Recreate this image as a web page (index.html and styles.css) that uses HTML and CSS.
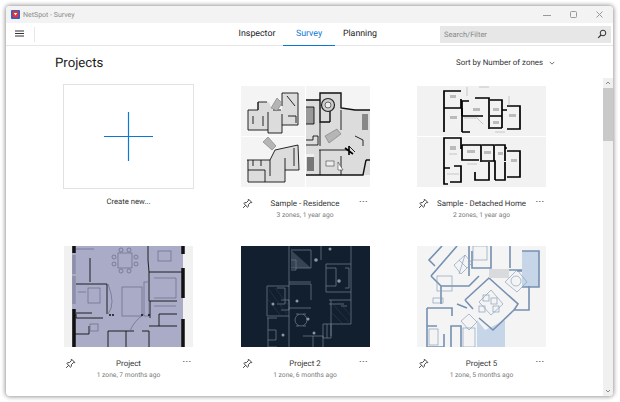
FILE: index.html
```html
<!DOCTYPE html>
<html lang="en">
<head>
<meta charset="utf-8">
<title>NetSpot - Survey</title>
<link rel="stylesheet" href="styles.css">
</head>
<body>
<svg class="defs" width="0" height="0">
  <symbol id="pin" viewBox="0 0 12 12">
    <path d="M7.2 1.3 L10.7 4.8 L9.9 5.4 L9.1 5 L7 7.2 L6.9 9.2 L6 10 L2 6 L2.8 5.1 L4.8 5 L7 2.9 L6.6 2.1 Z M4 8 L1.2 10.8" fill="none" stroke="#333" stroke-width="1" stroke-linejoin="round"/>
  </symbol>
</svg>
<div class="window">
  <div class="titlebar">
    <svg class="appicon" viewBox="0 0 9 9"><rect width="9" height="9" rx="1" fill="#2c5fd0"/><rect x="1.5" y="1" width="6" height="6.5" rx="1" fill="#e6352e"/><path d="M2.8 3 H6.2 L4.5 5.6 Z" fill="#fff"/></svg>
    <span class="apptitle">NetSpot - Survey</span>
    <div class="controls">
      <svg class="ctl" viewBox="0 0 10 10"><path d="M0 5.5 H8" stroke="#999" fill="none"/></svg>
      <svg class="ctl" viewBox="0 0 10 10"><rect x="1.5" y="1.5" width="6" height="6" rx="1" stroke="#999" fill="none"/></svg>
      <svg class="ctl" viewBox="0 0 10 10"><path d="M1.5 1.5 L7.5 7.5 M7.5 1.5 L1.5 7.5" stroke="#999" fill="none"/></svg>
    </div>
  </div>
  <div class="toolbar">
    <svg class="menu" viewBox="0 0 10 8"><path d="M0 1 H9 M0 3.5 H9 M0 6 H9" stroke="#333" stroke-width="1" fill="none"/></svg>
    <span class="divider"></span>
    <nav class="tabs">
      <span class="tab">Inspector</span>
      <span class="tab active">Survey</span>
      <span class="tab">Planning</span>
    </nav>
    <div class="search">
      <span>Search/Filter</span>
      <svg class="lens" viewBox="0 0 10 10"><circle cx="6" cy="4" r="2.8" fill="none" stroke="#333" stroke-width="1"/><path d="M4 6 L1.2 8.8" stroke="#333" stroke-width="1.2"/></svg>
    </div>
  </div>
  <div class="head">
    <h1>Projects</h1>
    <div class="sort">Sort by Number of zones
      <svg class="chev" viewBox="0 0 8 5"><path d="M1 1 L4 4 L7 1" fill="none" stroke="#444"/></svg>
    </div>
  </div>
  <div class="body">
    <div class="grid">

      <div class="card">
        <div class="slot create">
          <svg viewBox="0 0 49 49" class="plus"><path d="M24.5 0 V49 M0 24.5 H49" stroke="#0a78d4" stroke-width="1.2"/></svg>
        </div>
        <div class="createlabel">Create new...</div>
      </div>

      <div class="card">
        <div class="slot">
          <svg class="plan" viewBox="0 0 129 101">
            <rect width="129" height="101" fill="#f4f4f4"/>
            <path d="M64.5 0 V101 M0 50.5 H64" stroke="#fff" stroke-width="1.2"/>
            <path class="room" d="M7 24 H17 V16 H28 L31 24 H41 V7 H57 V39 H41 V47 H27 V44 H7 Z"/>
            <path class="wall thin" d="M7 24 H17 V16 H26 M32 24 H40 M41 7 H57 V39 H41 M41 7 V20 M7 24 V44 H27 V47 H41 V28 M27 26 V44 M17 16 V24 M22 30 V40 M12 30 V38 M46 10 L54 20 M47 30 H55 V37"/>
            <path class="stair" d="M30 22 L36 12 L41 17 L36 25 Z"/>
            <path class="stair" d="M22 56 L27 51 L35 60 L31 64 Z"/>
            <path class="room" d="M6 74 H29 L34 64 L57 59 L58 84 L44 84 V96 H7 Z"/>
            <path class="wall thin" d="M6 74 H29 L34 64 L57 59 L58 84 L44 84 V96 H7 V74 M7 84 H24 V96 M12 74 V80 M20 74 V80 M29 74 V90 M44 84 V72 M53 62 V80"/>
            <path class="room" d="M65 14 H79 V7 H100 V21 L115 24 H129 V89 H65 Z"/>
            <path class="wall" d="M65 14 H79 V7 H100 V22 L114 24 H129 M89 36 V22 M79 7 V36 H89 M65 89 H122 L125 74 M125 74 H129"/>
            <rect x="65" y="21" width="8" height="17" fill="#999"/>
            <path class="wall thin" d="M65 21 H73 V38 H65"/>
            <circle cx="87" cy="19" r="6.5" fill="#ccc" stroke="#222" stroke-width="1.2"/>
            <circle cx="87" cy="19" r="3" fill="#eee" stroke="#333" stroke-width=".7"/>
            <path class="stair" d="M84 50 L96 43 L100 48 L88 57 Z"/>
            <path class="wall thin" d="M65 54 H72 V50 H77 V59 H65 M79 36 V60 M78 64 H108 M108 60 L114 66 M114 50 L122 54 M122 54 V60 M100 24 V44 M79 64 V89 M100 70 V89"/>
            <rect x="121" y="28" width="6" height="16" fill="#888"/>
            <rect x="66" y="70" width="7" height="15" fill="#777"/>
            <rect x="65" y="68" width="8" height="3" fill="#eee"/>
            <rect x="85" y="75" width="8" height="5" fill="#eee" stroke="#444" stroke-width=".6"/>
            <path d="M97 76 L102 84 H97 Z" fill="#fff" stroke="#444" stroke-width=".6"/>
            <path d="M104 62 L112 68 M108 60 V69" stroke="#000" stroke-width="1.6"/>
          </svg>
        </div>
        <div class="titlerow">
          <svg class="pinicon"><use href="#pin"/></svg>
          <span class="name">Sample - Residence</span>
          <span class="more">···</span>
        </div>
        <div class="meta">3 zones, 1 year ago</div>
      </div>

      <div class="card">
        <div class="slot">
          <svg class="plan" viewBox="0 0 129 101">
            <rect width="129" height="101" fill="#f2f2f2"/>
            <path d="M0 50.5 H129" stroke="#fff" stroke-width="1.2"/>
            <g class="wall heavy">
              <path d="M27 46 V5 H44 M27 22 H44 V13 M45 46 V22"/>
              <path d="M45 30 V15 H52 M58 12 H72 V14 M72 14 V43 M45 30 H66 M45 46 H53"/>
              <path d="M73 14 H85 V42 M73 30 H85 M73 42 H85"/>
              <path d="M90 20 H103 V43 H90 M85 24 H90"/>
              <path d="M27 66 V52 H44 V63 M27 66 V98 H31 M27 82 H33 M37 80 H44 V96 H33"/>
              <path d="M45 59 V74 H62 M45 59 H64 V76"/>
              <path d="M65 59 H77 V75 M65 75 H78 V94 M78 59 H88 V75"/>
              <path d="M90 65 H103 V91 H90 M88 62 H90"/>
              <path d="M58 86 V94 H72 V76 M78 94 H88 V76"/>
            </g>
            <rect x="33" y="9" width="6" height="3" fill="#bbb"/>
            <rect x="33" y="30" width="7" height="3" fill="#bbb"/>
            <rect x="56" y="22" width="7" height="3" fill="#bbb"/>
            <rect x="76" y="22" width="6" height="3" fill="#bbb"/>
            <rect x="76" y="35" width="6" height="3" fill="#bbb"/>
            <rect x="92" y="28" width="7" height="3" fill="#bbb"/>
            <rect x="33" y="60" width="6" height="4" fill="#bbb"/>
            <rect x="50" y="64" width="8" height="3" fill="#bbb"/>
            <rect x="67" y="65" width="7" height="3" fill="#bbb"/>
            <rect x="81" y="66" width="5" height="3" fill="#bbb"/>
            <rect x="94" y="73" width="6" height="3" fill="#bbb"/>
            <path class="hair" d="M50 1 V10 M62 1 H72 M47 32 H60 L66 38 M32 68 H40 M30 88 H42 M50 78 H60 M92 10 V20 M78 46 H88"/>
          </svg>
        </div>
        <div class="titlerow">
          <svg class="pinicon"><use href="#pin"/></svg>
          <span class="name">Sample - Detached Home</span>
          <span class="more">···</span>
        </div>
        <div class="meta">2 zones, 1 year ago</div>
      </div>

      <div class="card">
        <div class="slot">
          <svg class="plan" viewBox="0 0 129 101">
            <rect width="129" height="101" fill="#f1f1f1"/>
            <rect x="8" y="0" width="111" height="101" fill="#a9abc7"/>
            <path d="M10 0 V7 M10 63 V101 M119 0 V8 M119 22 V52 M119 73 V101 M119 82 V101" stroke="#111" stroke-width="3.5"/>
            <path d="M10 30 V58 M10 9 V28" stroke="#8d8fa9" stroke-width="3.5"/>
            <g class="wall thin">
              <path d="M26 12 V36 M12 38 H43 V68 M12 67 H28 M12 68 V72 H39"/>
              <path d="M84 0 V14 L85 26 H118 M85 26 V55 H113 M86 55 V72 M113 68 H95 V80 M113 80 H85"/>
              <path d="M44 85 H70 M44 85 V101 M62 85 V101 M78 85 L85 85 V101"/>
              <path d="M10 88 H25 M25 80 V88"/>
            </g>
            <g class="line">
              <rect x="54" y="7" width="14" height="15"/>
              <circle cx="57" cy="4" r="2"/><circle cx="65" cy="4" r="2"/>
              <circle cx="50" cy="11" r="2"/><circle cx="50" cy="18" r="2"/>
              <circle cx="72" cy="11" r="2"/><circle cx="72" cy="18" r="2"/>
              <circle cx="57" cy="25" r="2"/><circle cx="65" cy="25" r="2"/>
              <rect x="58" y="41" width="20" height="29"/>
              <rect x="80" y="36" width="5" height="34"/>
              <rect x="24" y="42" width="12" height="15"/>
              <rect x="94" y="5" width="13" height="10"/>
              <path d="M44 38 Q52 58 44 68 M80 68 Q70 75 66 85"/>
              <rect x="26" y="78" width="8" height="7"/>
              <path d="M12 3 H30 M90 32 H112 V52 H90 M14 46 H22 M90 60 H112"/>
            </g>
            <circle cx="46" cy="69" r="1" fill="#111"/><circle cx="49" cy="69" r="1" fill="#111"/>
            <circle cx="78" cy="69" r="1" fill="#111"/><circle cx="85" cy="69" r="1" fill="#111"/>
          </svg>
        </div>
        <div class="titlerow">
          <svg class="pinicon"><use href="#pin"/></svg>
          <span class="name">Project</span>
          <span class="more">···</span>
        </div>
        <div class="meta">1 zone, 7 months ago</div>
      </div>

      <div class="card">
        <div class="slot">
          <svg class="plan" viewBox="0 0 129 101">
            <rect width="129" height="101" fill="#111f2e"/>
            <g class="dark">
              <path d="M48 0 V38 H70 V54 M48 38 V101 M80 0 V14 M110 0 V18 M85 18 H110 V46 H85 V18 M48 36 H70 M48 62 H70 M88 54 H110 V78 H90 M90 54 V90 M110 46 V54"/>
              <path d="M50 4 H70 V22 H50 M50 14 H55 V24 H50 M85 22 H95 V40 H85 M104 22 H108 V42 H104"/>
              <path d="M26 40 H48 M26 40 V70 H48 M36 42 H44 V58 H36 M40 54 H48 V64 H40"/>
              <path d="M26 72 H36 M27 72 V101 H36 M27 84 H35 V94 H27 M62 90 H82 V101 M72 90 V101"/>
              <path d="M82 78 H90 V92 H82 Z M86 78 V92"/>
              <circle cx="60" cy="74" r="6"/><path d="M55 68 H58 M62 68 H65 M55 80 H58 M62 80 H65"/>
              <path d="M88 58 H103 M100 60 H106" />
            </g>
            <g class="darkhatch">
              <path d="M28 44 L46 68 M34 42 L48 60 M26 52 L40 70 M90 56 L108 76 M98 56 L110 70 M90 66 L102 78"/>
            </g>
            <g fill="#8a96a3">
              <circle cx="75" cy="14" r="1.8"/><circle cx="89" cy="3" r="1.5"/><circle cx="98" cy="35" r="1.8"/>
              <circle cx="32" cy="58" r="1.5"/><circle cx="56" cy="55" r="1.5"/><circle cx="67" cy="73" r="1.5"/>
              <circle cx="73" cy="87" r="1.5"/><circle cx="42" cy="89" r="1.5"/>
            </g>
            <path d="M50 4 L70 22 H50 Z" fill="#66727f" opacity=".45"/>
          </svg>
        </div>
        <div class="titlerow">
          <svg class="pinicon"><use href="#pin"/></svg>
          <span class="name">Project 2</span>
          <span class="more">···</span>
        </div>
        <div class="meta">1 zone, 6 months ago</div>
      </div>

      <div class="card">
        <div class="slot">
          <svg class="plan" viewBox="0 0 129 101">
            <rect width="129" height="101" fill="#f4f4f5"/>
            <path d="M105 5 H122 V41 H105 Z" fill="#c6d5e8"/>
            <path d="M60 101 V74 L68 84 L88 74 V101 Z" fill="#c6d5e8"/>
            <g class="blue">
              <path d="M105 5 H122 V41 H105 M100 25 H105 M55 5 V22 H74 V0 M93 0 V22 M74 24 H105"/>
              <path d="M14 30 L40 0 M14 30 L24 40 M24 40 H52 L62 30 M24 58 V40 M18 20 L12 14 L25 0"/>
              <path d="M48 54 L72 32 L101 58 L97 64 H112 V40 M48 54 L56 63 M62 72 L76 84 L97 64"/>
              <path d="M10 62 H35 V70 M10 62 V101 H27 M10 80 H20 M27 88 V101 M34 101 V80 H44 V101"/>
              <path d="M40 58 L50 62 M52 0 V30"/>
            </g>
            <g class="bluethin">
              <rect x="20" y="30" width="15" height="15"/>
              <path d="M37 19 L48 9 L55 17 L44 28 Z M42 14 L50 22 M48 9 L42 28"/>
              <path d="M62 56 L74 44 L86 58 L74 69 Z"/>
              <rect x="66" y="49" width="6" height="6"/><rect x="74" y="52" width="6" height="6"/><rect x="62" y="60" width="6" height="6"/><rect x="76" y="60" width="6" height="6"/>
              <path d="M88 36 L100 24 L110 36 L100 46 Z"/><circle cx="99" cy="35" r="5"/>
              <rect x="12" y="83" width="9" height="16"/>
              <rect x="46" y="82" width="12" height="19"/>
              <path d="M44 75 L52 68 L60 76 L52 84 Z"/>
              <rect x="16" y="52" width="10" height="5"/>
              <rect x="56" y="0" width="14" height="14"/>
            </g>
            <rect x="72" y="23" width="20" height="9" fill="#d9dadd"/>
          </svg>
        </div>
        <div class="titlerow">
          <svg class="pinicon"><use href="#pin"/></svg>
          <span class="name">Project 5</span>
          <span class="more">···</span>
        </div>
        <div class="meta">1 zone, 5 months ago</div>
      </div>

    </div>
    <div class="scrollbar">
      <svg class="arrow" viewBox="0 0 9 10"><path d="M2.5 6 L4.5 4 L6.5 6" fill="none" stroke="#8a8a8a"/></svg>
      <div class="thumb"></div>
      <div class="track"></div>
      <svg class="arrow" viewBox="0 0 9 10"><path d="M2.5 4 L4.5 6 L6.5 4" fill="none" stroke="#8a8a8a"/></svg>
    </div>
  </div>
</div>
</body>
</html>
```

FILE: styles.css
```css
* { box-sizing: border-box; }
html, body { margin: 0; height: 100%; background: #fff; }
body {
  padding: 6px 7px 6px 6px;
  font-family: Roboto, "Open Sans", sans-serif;
  text-rendering: geometricPrecision;
  color: #222;
  overflow: hidden;
}
.defs { position: absolute; }
.window {
  width: 607px;
  height: 390px;
  display: flex;
  flex-direction: column;
  background: #fff;
  border-radius: 4px;
  overflow: hidden;
  box-shadow: 0 0 4px 1px rgba(0, 0, 0, .4);
}
.titlebar {
  height: 17px;
  flex: none;
  display: flex;
  align-items: center;
  background: #f3f3f3;
  padding-left: 5px;
}
.appicon { width: 9px; height: 9px; margin-right: 3px; }
.apptitle { font-size: 7px; color: #8a8a8a; }
.controls {
  margin-left: auto;
  display: flex;
  gap: 16px;
  padding-right: 8px;
}
.ctl { width: 10px; height: 10px; }
.toolbar {
  height: 23px;
  flex: none;
  display: flex;
  align-items: center;
  border-bottom: 1px solid #e6e6e6;
}
.menu { width: 10px; height: 8px; margin-left: 9px; }
.divider { width: 1px; height: 15px; background: #e8e8e8; margin-left: 9px; }
.tabs { display: flex; margin-left: 196px; height: 22px; }
.tab {
  width: 52px;
  display: flex;
  align-items: center;
  justify-content: center;
  font-size: 8.8px;
  color: #222;
  border-bottom: 1px solid transparent;
  margin-bottom: -1px;
}
.tab.active { color: #0a78d4; border-bottom: 1.5px solid #0a78d4; }
.tab:last-child { width: 50px; }
.search {
  margin-left: auto;
  margin-right: 2px;
  width: 171px;
  height: 17px;
  background: #e7e7e7;
  display: flex;
  align-items: center;
  justify-content: space-between;
  padding: 0 4px;
  font-size: 7.5px;
  color: #888;
}
.lens { width: 10px; height: 10px; }
.head {
  height: 32px;
  flex: none;
  display: flex;
  align-items: center;
  justify-content: space-between;
  padding: 1px 58px 0 49px;
}
.head h1 { margin: 2px 0 0; font-size: 13.2px; font-weight: 400; color: #1a1a1a; }
.sort { font-size: 7.9px; color: #333; display: flex; align-items: center; gap: 6px; }
.chev { width: 6px; height: 4px; }
.body { flex: 1; min-height: 0; display: flex; }
.grid {
  flex: 1;
  min-width: 0;
  overflow: hidden;
  padding: 6px 0 0 57px;
  display: grid;
  grid-template-columns: repeat(3, 131px);
  column-gap: 45.5px;
  grid-auto-rows: 160px;
  align-content: start;
}
.card { display: flex; flex-direction: column; }
.slot {
  height: 105px;
  flex: none;
  display: flex;
  align-items: center;
  justify-content: center;
}
.slot.create { border: 1px solid #e2e2e2; }
.plus { width: 49px; height: 49px; }
.createlabel { margin-top: 8px; text-align: center; font-size: 7.7px; color: #333; }
.plan { width: 129px; height: 101px; display: block; filter: blur(.25px); }
.titlerow {
  margin-top: 8px;
  height: 12px;
  display: flex;
  align-items: center;
  padding: 0 1px;
}
.pinicon { width: 11px; height: 11px; margin-left: 1px; flex: none; }
.name {
  flex: 1;
  text-align: center;
  font-size: 7.9px;
  color: #333;
  white-space: nowrap;
}
.more { width: 12px; flex: none; font-size: 10px; letter-spacing: .4px; text-align: center; color: #333; line-height: 1; }
.meta { height: 12px; line-height: 12px; text-align: center; font-size: 6.7px; color: #7a7a7a; }
.scrollbar {
  width: 10px;
  flex: none;
  display: flex;
  flex-direction: column;
  background: #f0f0f0;
}
.arrow { width: 10px; height: 10px; flex: none; }
.thumb { height: 53px; background: #c9c9c9; flex: none; }
.track { flex: 1; }
.room { fill: #dcdcdc; stroke: none; }
.wall { fill: none; stroke: #111; stroke-width: 1.4; }
.wall.thin { stroke-width: .9; }
.wall.heavy { stroke-width: 1.7; stroke: #000; }
.stair { fill: #b5b5b5; stroke: #666; stroke-width: .5; }
.hair { fill: none; stroke: #999; stroke-width: .5; }
.line { fill: none; stroke: #6a6c85; stroke-width: .7; }
.dark { fill: none; stroke: #77838f; stroke-width: .7; }
.darkhatch { fill: none; stroke: #37444f; stroke-width: .5; }
.blue { fill: none; stroke: #7590b0; stroke-width: 1.6; }
.bluethin { fill: none; stroke: #8aa0ba; stroke-width: .7; }
```
